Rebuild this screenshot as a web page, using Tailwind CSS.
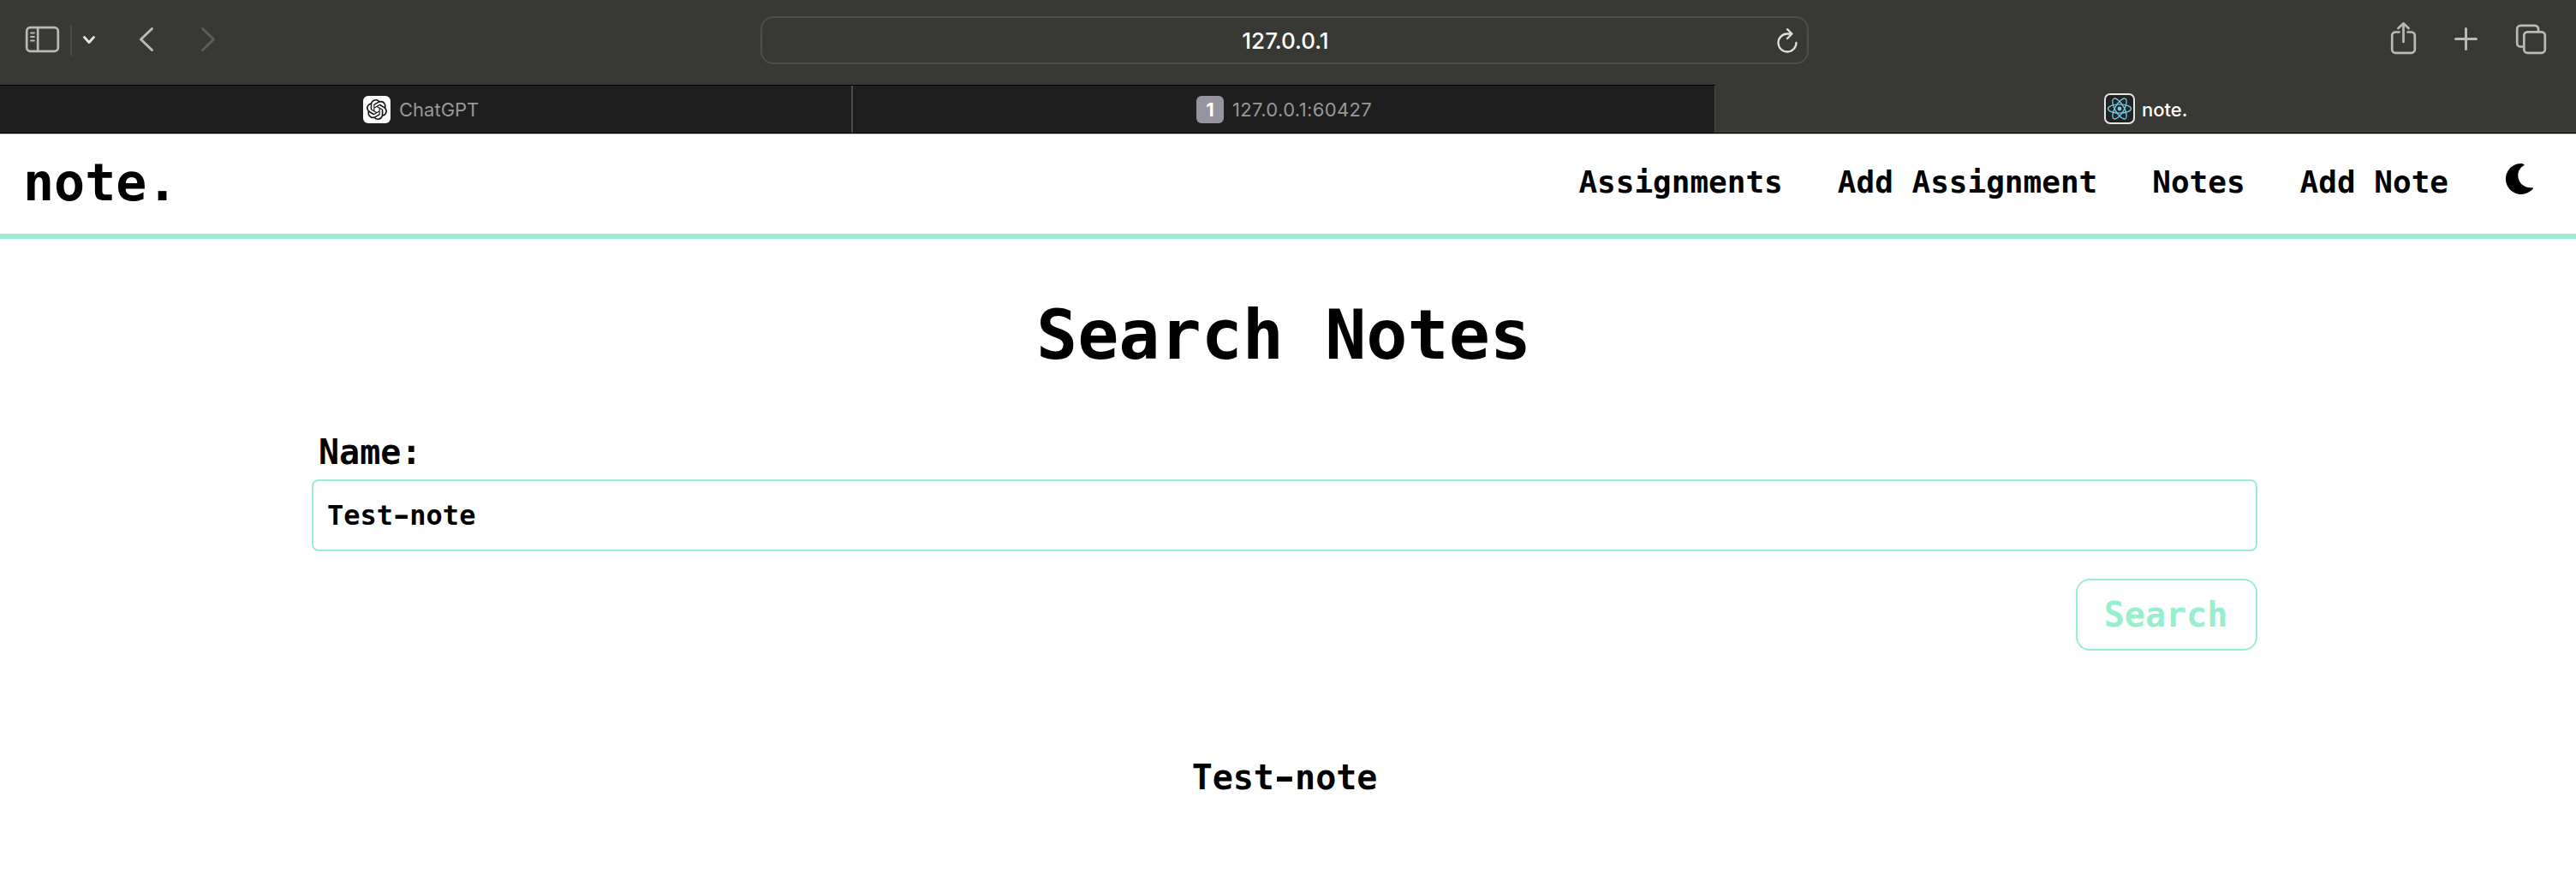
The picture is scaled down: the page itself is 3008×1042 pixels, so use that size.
<!DOCTYPE html>
<html lang="en">
<head>
<meta charset="utf-8">
<title>note.</title>
<script src="https://cdn.jsdelivr.net/npm/@tailwindcss/browser@4"></script>
</head>
<body class="w-[3008px] h-[1042px] overflow-hidden bg-white text-black font-['DejaVu_Sans_Mono',monospace] font-bold">
<!-- Browser toolbar -->
<div class="h-[99px] bg-[#383835] flex items-start font-['Inter',sans-serif] font-medium">
  <svg class="block w-[888px] h-[99px] shrink-0" viewBox="0 0 888 99" fill="none" stroke-linecap="round" stroke-linejoin="round">
    <g stroke="#b9b9b7" stroke-width="2.700">
      <rect x="31.2" y="32.2" width="36.6" height="27.6" rx="4"/>
      <path d="M44.2 32.5v27"/>
      <path d="M36 38.5h4M36 43h4M36 47.500h4" stroke-width="1.8"/>
    </g>
    <path d="M83 29v36" stroke="#4b4b49" stroke-width="2" stroke-linecap="butt"/>
    <path d="M98.500 43.500l5.500 6 5.500-6" stroke="#e2e2e1" stroke-width="3"/>
    <path d="M177.500 33.500l-13 12.500 13 12.500" stroke="#b9b9b7" stroke-width="3"/>
    <path d="M236.500 33.500l13 12.500-13 12.500" stroke="#5d5d5b" stroke-width="3"/>
  </svg>
  <div class="relative mt-[19px] w-[1224px] h-14 rounded-[15px] border-2 border-[#4e4e4c] flex items-center justify-center text-white text-[26px]">
    <span class="pt-px pl-0.5">127.0.0.1</span>
    <svg class="absolute right-[8px] top-[8px] w-8 h-9" viewBox="0 0 32 36" fill="none" stroke="#dededd" stroke-width="2.300" stroke-linecap="round" stroke-linejoin="round">
      <path d="M27.500 20.800a10.500 10.500 0 1 1-10.500-10.300h5M17 5.200l5.500 5.300-5.500 5.500"/>
    </svg>
  </div>
  <svg class="block w-[896px] h-[99px] shrink-0" viewBox="2112 0 896 99" fill="none" stroke="#b9b9b7" stroke-width="2.700" stroke-linecap="round" stroke-linejoin="round">
    <path d="M2801.500 37.500h-4.300a4 4 0 0 0-4 4v16.300a4 4 0 0 0 4 4h18.600a4 4 0 0 0 4-4V41.500a4 4 0 0 0-4-4h-4.300M2806.500 49V27.500M2800.500 33l6-5.700 6 5.700"/>
    <path d="M2867.500 45.500h24M2879.500 33.500v24" stroke-width="3"/>
    <rect x="2947.300" y="37.300" width="24.500" height="24.500" rx="4"/>
    <path d="M2947 54.500h-3.800a4 4 0 0 1-4-4V33.800a4 4 0 0 1 4-4h16.800a4 4 0 0 1 4 4v3.200"/>
  </svg>
</div>
<!-- Tabs -->
<div class="h-[58px] border-b border-[#c4c4c4] flex font-['Inter',sans-serif] font-normal text-[22px] text-[#989898]">
  <div class="w-[996px] h-[57px] bg-[#1e1e1e] border-y border-black pl-[424px] flex items-center shadow-[inset_-2px_0_0_#4b4b49]">
    <span class="w-8 h-8 rounded-md bg-white flex items-center justify-center">
      <svg class="w-6 h-6" viewBox="0 0 24 24" fill="#111"><path d="M22.2819 9.8211a5.9847 5.9847 0 0 0-.5157-4.9108 6.0462 6.0462 0 0 0-6.5098-2.9A6.0651 6.0651 0 0 0 4.9807 4.1818a5.9847 5.9847 0 0 0-3.9977 2.9 6.0462 6.0462 0 0 0 .7427 7.0966 5.98 5.98 0 0 0 .511 4.9107 6.051 6.051 0 0 0 6.5146 2.9001A5.9847 5.9847 0 0 0 13.2599 24a6.0557 6.0557 0 0 0 5.7718-4.2058 5.9894 5.9894 0 0 0 3.9977-2.9001 6.0557 6.0557 0 0 0-.7475-7.0729zm-9.022 12.6081a4.4755 4.4755 0 0 1-2.8764-1.0408l.1419-.0804 4.7783-2.7582a.7948.7948 0 0 0 .3927-.6813v-6.7369l2.02 1.1686a.071.071 0 0 1 .038.052v5.5826a4.504 4.504 0 0 1-4.4945 4.4944zm-9.6607-4.1254a4.4708 4.4708 0 0 1-.5346-3.0137l.142.0852 4.783 2.7582a.7712.7712 0 0 0 .7806 0l5.8428-3.3685v2.3324a.0804.0804 0 0 1-.0332.0615L9.74 19.9502a4.4992 4.4992 0 0 1-6.1408-1.6464zM2.3408 7.8956a4.485 4.485 0 0 1 2.3655-1.9728V11.6a.7664.7664 0 0 0 .3879.6765l5.8144 3.3543-2.0201 1.1685a.0757.0757 0 0 1-.071 0l-4.8303-2.7865A4.504 4.504 0 0 1 2.3408 7.872zm16.5963 3.8558L13.1038 8.364 15.1192 7.2a.0757.0757 0 0 1 .071 0l4.8303 2.7913a4.4944 4.4944 0 0 1-.6765 8.1042v-5.6772a.79.79 0 0 0-.407-.667zm2.0107-3.0231l-.142-.0852-4.7735-2.7818a.7759.7759 0 0 0-.7854 0L9.409 9.2297V6.8974a.0662.0662 0 0 1 .0284-.0615l4.8303-2.7866a4.4992 4.4992 0 0 1 6.6802 4.66zM8.3065 12.863l-2.02-1.1638a.0804.0804 0 0 1-.038-.0567V6.0742a4.4992 4.4992 0 0 1 7.3757-3.4537l-.142.0805L8.704 5.459a.7948.7948 0 0 0-.3927.6813zm1.0976-2.3654l2.602-1.4998 2.6069 1.4998v2.9994l-2.5974 1.4997-2.6067-1.4997Z"/></svg>
    </span>
    <span class="ml-[10px] pt-0.5">ChatGPT</span>
  </div>
  <div class="w-[1007px] h-[57px] bg-[#1e1e1e] border-y border-black pl-[401px] flex items-center shadow-[inset_-1px_0_0_#4b4b49]">
    <span class="w-8 h-8 rounded-md bg-[#9594a1] text-white font-bold flex items-center justify-center pt-0.5">1</span>
    <span class="ml-[10px] pt-0.5 tracking-[0.37px]">127.0.0.1:60427</span>
  </div>
  <div class="flex-1 h-[57px] bg-[#383835] border-b border-black pl-[454px] flex items-center font-medium text-white">
    <span class="w-9 h-9 rounded-[7px] bg-[#222] border-2 border-[#e4e4e3] flex items-center justify-center">
      <svg class="w-[30px] h-[30px]" viewBox="-15 -15 30 30" fill="none" stroke="#70cdee" stroke-width="1.300">
        <circle r="2.400" fill="#70cdee" stroke="none"/>
        <ellipse rx="13.500" ry="5.200"/><ellipse rx="13.500" ry="5.200" transform="rotate(60)"/><ellipse rx="13.500" ry="5.200" transform="rotate(120)"/>
      </svg>
    </span>
    <span class="ml-2 pt-0.5">note.</span>
  </div>
</div>
<!-- Site header -->
<header class="h-[122px] border-b-[6px] border-[#98efcd] flex items-start pl-[27px]">
  <h1 class="mt-[21px] text-[60px] leading-[70px]">note.</h1>
  <nav class="ml-auto mr-[49px] mt-[35px] flex gap-16 text-[36px] leading-[42px]">
    <a>Assignments</a><a>Add Assignment</a><a>Notes</a><a>Add Note</a>
    <svg class="w-[36px] h-9 -mt-px" viewBox="-3 0 36 36"><path d="M21.500 1.300C20.500.3 19 0 17.700 0A18 18 0 1 0 32 29.200C32.300 28.600 31.800 28.100 31 28.200C21.500 29 14.300 22.500 14.300 14C14.300 8.600 17 4.300 21.200 2.200C21.700 1.900 21.800 1.600 21.500 1.300Z"/></svg>
  </nav>
</header>
<!-- Search form -->
<main class="pl-[364px] pr-[372px] flex flex-col">
  <h2 class="mt-[66px] mr-0.5 text-center text-[80px] leading-[94px]">Search Notes</h2>
  <label class="mt-[65px] pl-2 text-[40px] leading-[48px]">Name:</label>
  <div role="textbox" class="mt-[8px] h-[84px] rounded-lg border-2 border-[#98efcd] px-4 text-[32px] flex items-center"><span>Test<span class="inline-block scale-x-[1.45]">-</span>note</span></div>
  <button class="mt-8 self-end w-[212px] h-[84px] rounded-2xl border-2 border-[#98efcd] text-[#98efcd] text-[40px] pr-0.5">Search</button>
  <p class="mt-[124px] text-center text-[40px] leading-[48px]">Test<span class="inline-block scale-x-[1.45]">-</span>note</p>
</main>
</body>
</html>
